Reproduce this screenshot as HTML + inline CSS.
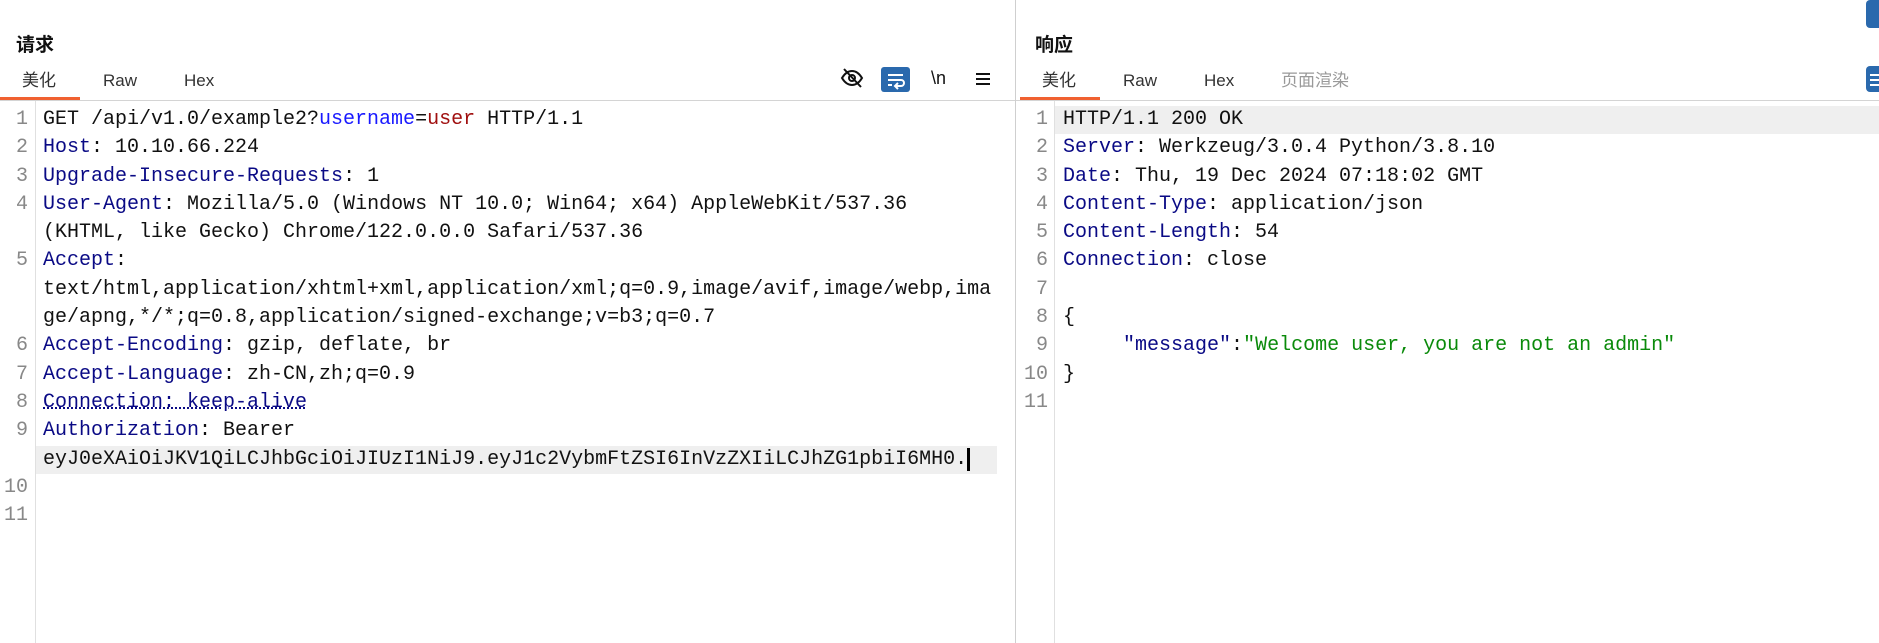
<!DOCTYPE html>
<html><head><meta charset="utf-8"><style>
*{margin:0;padding:0;box-sizing:border-box}
body{width:1879px;height:643px;background:#fff;position:relative;overflow:hidden;font-family:"Liberation Sans","Noto Sans CJK SC",sans-serif}
.abs{position:absolute}
.title{font-size:19px;font-weight:bold;color:#111;line-height:24px;font-family:"Liberation Sans","Noto Sans CJK SC",sans-serif}
.tab{font-size:17px;color:#333;top:71px;line-height:20px;height:20px}
.code{font-family:"Liberation Mono","Noto Sans CJK SC",monospace;font-size:20px;line-height:28.3px;white-space:pre;color:#111}
.ln{font-family:"Liberation Mono",monospace;font-size:20px;line-height:28.3px;white-space:pre;color:#888;text-align:right}
.k{color:#0a0a85}.b{color:#1a1aff}.r{color:#a01010}.g{color:#0a8a0a}
</style></head><body>
<div class="abs title" style="left:16px;top:34px">请求</div>
<div class="abs title" style="left:1035px;top:34px">响应</div>
<div class="abs tab" style="left:22px">美化</div>
<div class="abs tab" style="left:103px">Raw</div>
<div class="abs tab" style="left:184px">Hex</div>
<div class="abs tab" style="left:1042px">美化</div>
<div class="abs tab" style="left:1123px">Raw</div>
<div class="abs tab" style="left:1204px">Hex</div>
<div class="abs tab" style="left:1281px;color:#999">页面渲染</div>
<div class="abs" style="left:0;top:100px;width:1879px;height:1px;background:#d4d4d4"></div>
<div class="abs" style="left:0;top:97px;width:80px;height:3px;background:#f06030"></div>
<div class="abs" style="left:1020px;top:97px;width:80px;height:3px;background:#f06030"></div>
<div class="abs" style="left:1015px;top:0;width:1px;height:643px;background:#cfcfcf"></div>
<div class="abs" style="left:35px;top:101px;width:1px;height:542px;background:#e0e0e0"></div>
<div class="abs" style="left:1054px;top:101px;width:1px;height:542px;background:#e0e0e0"></div>
<svg class="abs" style="left:840px;top:66px" width="24" height="24" viewBox="0 0 24 24" fill="none" stroke="#111" stroke-width="2"><path d="M2 12c3-5 6-7 10-7s7 2 10 7c-3 5-6 7-10 7s-7-2-10-7z"/><circle cx="12" cy="12" r="3"/><path d="M4 3l17 18"/></svg>
<div class="abs" style="left:881px;top:67px;width:29px;height:25px;background:#2a69ad;border-radius:3px"></div>
<svg class="abs" style="left:881px;top:67px" width="29" height="25" viewBox="0 0 29 25" fill="none" stroke="#fff" stroke-width="2"><path d="M7 8h15M7 13h13a3 3 0 0 1 0 6h-5M7 18h4M17 16l-3 3 3 3"/></svg>
<div class="abs" style="left:931px;top:68px;font-size:18px;color:#111">\n</div>
<svg class="abs" style="left:975px;top:71px" width="16" height="16" viewBox="0 0 16 16" stroke="#111" stroke-width="2"><path d="M1 3h14M1 8h14M1 13h14"/></svg>
<div class="abs" style="left:1866px;top:0;width:16px;height:28px;background:#2a69ad;border-radius:4px 0 0 4px"></div>
<div class="abs" style="left:1866px;top:66px;width:16px;height:26px;background:#2a69ad;border-radius:4px 0 0 4px"></div>
<svg class="abs" style="left:1866px;top:66px" width="13" height="26"><path d="M4 9h9M4 14h9M4 19h9" stroke="#fff" stroke-width="2"/></svg>
<div class="abs" style="left:36px;top:446px;width:961px;height:28.3px;background:#efefef"></div>
<div class="abs" style="left:1055px;top:106px;width:824px;height:28px;background:#efefef"></div>
<div class="abs ln" style="left:0;top:106px;width:28px">1
2
3
4

5


6
7
8
9

10
11</div>
<div class="abs code" style="left:43px;top:106px">GET /api/v1.0/example2?<span class="b">username</span>=<span class="r">user</span> HTTP/1.1
<span class="k">Host</span>: 10.10.66.224
<span class="k">Upgrade-Insecure-Requests</span>: 1
<span class="k">User-Agent</span>: Mozilla/5.0 (Windows NT 10.0; Win64; x64) AppleWebKit/537.36
(KHTML, like Gecko) Chrome/122.0.0.0 Safari/537.36
<span class="k">Accept</span>:
text/html,application/xhtml+xml,application/xml;q=0.9,image/avif,image/webp,ima
ge/apng,*/*;q=0.8,application/signed-exchange;v=b3;q=0.7
<span class="k">Accept-Encoding</span>: gzip, deflate, br
<span class="k">Accept-Language</span>: zh-CN,zh;q=0.9
<span class="k" style="text-decoration:underline dotted #0a0a85">Connection: keep-alive</span>
<span class="k">Authorization</span>: Bearer
eyJ0eXAiOiJKV1QiLCJhbGciOiJIUzI1NiJ9.eyJ1c2VybmFtZSI6InVzZXIiLCJhZG1pbiI6MH0.<span style="border-left:3px solid #000"> </span></div>
<div class="abs ln" style="left:1020px;top:106px;width:28px">1
2
3
4
5
6
7
8
9
10
11</div>
<div class="abs code" style="left:1063px;top:106px">HTTP/1.1 200 OK
<span class="k">Server</span>: Werkzeug/3.0.4 Python/3.8.10
<span class="k">Date</span>: Thu, 19 Dec 2024 07:18:02 GMT
<span class="k">Content-Type</span>: application/json
<span class="k">Content-Length</span>: 54
<span class="k">Connection</span>: close

{
     <span class="k">"message"</span>:<span class="g">"Welcome user, you are not an admin"</span>
}
</div>
</body></html>
